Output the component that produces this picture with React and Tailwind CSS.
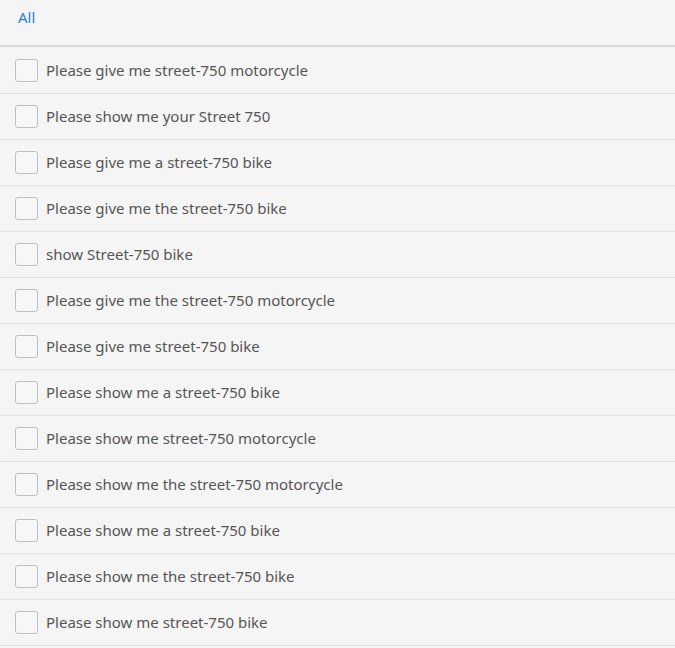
import React from "react";

const items = [
  "Please give me street-750 motorcycle",
  "Please show me your Street 750",
  "Please give me a street-750 bike",
  "Please give me the street-750 bike",
  "show Street-750 bike",
  "Please give me the street-750 motorcycle",
  "Please give me street-750 bike",
  "Please show me a street-750 bike",
  "Please show me street-750 motorcycle",
  "Please show me the street-750 motorcycle",
  "Please show me a street-750 bike",
  "Please show me the street-750 bike",
  "Please show me street-750 bike",
];

export default function App() {
  return (
    <div className="w-[675px] h-[648px] bg-[#f5f5f5] overflow-hidden" style={{ fontFamily: '"Noto Sans", sans-serif' }}>
      <div className="h-[47px] border-b-2 border-[#dadada] flex items-start pl-[18px] pt-[6px]">
        <span className="text-[15px] text-[#2a7fd8]">All</span>
      </div>
      <div className="pt-[1px]">
        {items.map((t, i) => (
          <div key={i} className="h-[46px] border-b border-[#e3e3e3] flex items-center">
            <div className="ml-[15px] w-[23px] h-[23px] border border-[#bfbfbf] rounded-[3px] bg-[#f7f7f7]" />
            <span className="ml-[8px] text-[15px] text-[#555555]">{t}</span>
          </div>
        ))}
      </div>
    </div>
  );
}
